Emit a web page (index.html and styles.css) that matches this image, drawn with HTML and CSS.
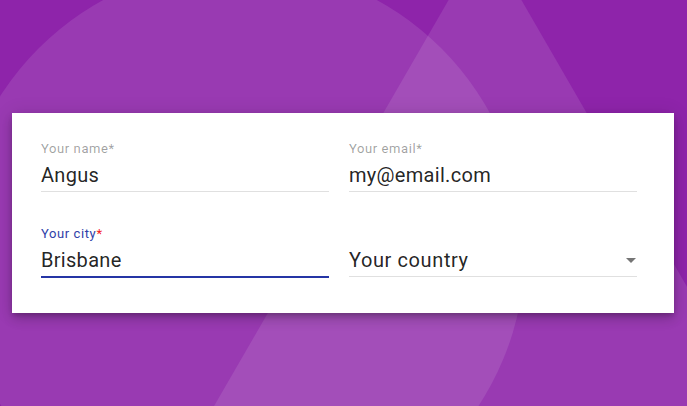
FILE: index.html
```html
<!DOCTYPE html>
<html>
<head>
<meta charset="utf-8">
<link rel="stylesheet" href="styles.css">
</head>
<body>
<div class="stage">
  <svg class="bg" width="687" height="406" viewBox="0 0 687 406" aria-hidden="true">
    <circle cx="240" cy="250" r="285" fill="#ffffff" fill-opacity="0.1"/>
    <polygon points="485,-63 102,600 868,600" fill="#ffffff" fill-opacity="0.1"/>
  </svg>
  <form class="card">
    <div class="field">
      <label class="label">Your name*</label>
      <div class="input">Angus</div>
    </div>
    <div class="field">
      <label class="label">Your email*</label>
      <div class="input">my@email.com</div>
    </div>
    <div class="field focused">
      <label class="label">Your city<span class="req">*</span></label>
      <div class="input">Brisbane</div>
    </div>
    <div class="field select">
      <label class="label"></label>
      <div class="input">Your country<span class="arrow"></span></div>
    </div>
  </form>
</div>
</body>
</html>
```
FILE: styles.css
```css
html, body {
  margin: 0;
  padding: 0;
}
body {
  font-family: Roboto, "Noto Sans", sans-serif;
  background: #8e24aa;
}
.stage {
  position: relative;
  width: 687px;
  height: 406px;
  overflow: hidden;
  background: #8e24aa;
  padding-top: 113px;
  box-sizing: border-box;
}
.bg {
  position: absolute;
  left: 0;
  top: 0;
}
.card {
  position: relative;
  margin: 0 0 0 12px;
  width: 662px;
  height: 200px;
  box-sizing: border-box;
  background: #fff;
  padding: 28px 37px 0 29px;
  display: grid;
  grid-template-columns: 288px 288px;
  column-gap: 20px;
  row-gap: 34px;
  align-content: start;
  box-shadow: 0 3px 5px -1px rgba(0,0,0,0.2), 0 6px 10px 0 rgba(0,0,0,0.14), 0 1px 18px 0 rgba(0,0,0,0.12);
}
.field {
  display: flex;
  flex-direction: column;
}
.label {
  font-size: 13px;
  line-height: 16px;
  height: 16px;
  color: rgba(0,0,0,0.38);
  letter-spacing: 0.6px;
}
.input {
  position: relative;
  margin-top: 6px;
  font-size: 20px;
  line-height: 24px;
  color: rgba(0,0,0,0.87);
  padding-bottom: 4px;
  border-bottom: 1px solid rgba(0,0,0,0.12);
  letter-spacing: 0.3px;
}
.focused .label {
  color: #3040a8;
}
.focused .input {
  border-bottom: 2px solid #2535a5;
}
.req {
  color: #f41c1c;
}
.select .input {
  letter-spacing: 0.6px;
}
.arrow {
  position: absolute;
  right: 1px;
  top: 10px;
  width: 0;
  height: 0;
  border-left: 5px solid transparent;
  border-right: 5px solid transparent;
  border-top: 5px solid rgba(0,0,0,0.54);
}
```
